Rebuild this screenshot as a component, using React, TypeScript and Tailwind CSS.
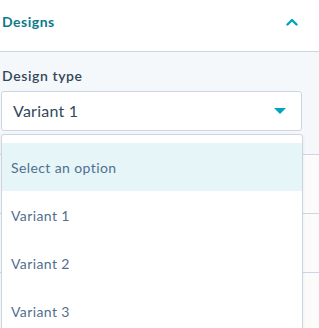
import { useState } from "react";

const options = ["Select an option", "Variant 1", "Variant 2", "Variant 3"];

export default function App() {
  const [value, setValue] = useState("Variant 1");
  const [open, setOpen] = useState(true);

  return (
    <div className="relative h-[328px] w-[319px] overflow-hidden bg-[#f5f8fa] font-['Lato',sans-serif]">
      <div className="flex h-[52px] items-start justify-between border-b border-[#cbd6e2] bg-white pl-[2px] pr-[21px] pt-[12px]">
        <h2 className="text-[14px] leading-[20px] font-bold tracking-[0.5px] text-[#0b7a8d]">Designs</h2>
        <svg className="mt-[6px]" width="12" height="8" viewBox="0 0 12 8" fill="none">
          <path d="M1.5 6.5L6 2l4.5 4.5" stroke="#00a4bd" strokeWidth="2.4" strokeLinecap="round" strokeLinejoin="round" />
        </svg>
      </div>
      <div className="px-[1px] pt-[13px]">
        <label className="block pl-[1px] text-[14px] font-semibold tracking-[0.6px] text-[#33475b]">Design type</label>
        <button
          onClick={() => setOpen(!open)}
          className="mt-[5px] flex h-[40px] w-[301px] items-center justify-between rounded-[3px] border border-[#cbd6e2] bg-white pl-[11px] pr-[15px] text-left text-[16px] tracking-[0.25px] text-[#33475b]"
        >
          <span>{value}</span>
          <svg width="12" height="6" viewBox="0 0 12 6">
            <path d="M0 0h12L6 6z" fill="#00a4bd" />
          </svg>
        </button>
      </div>
      <div className="mt-[23px] flex flex-col">
        <div className="h-[59px] border-t border-[#cbd6e2] bg-[#fbfbfb]" />
        <div className="h-[59px] border-t border-[#cbd6e2] bg-[#fbfbfb]" />
        <div className="h-[59px] border-t border-[#cbd6e2] bg-[#fbfbfb]" />
      </div>
      {open && (
        <ul className="absolute left-[1px] top-[134px] w-[302px] rounded-t-[3px] border border-[#cbd6e2] bg-white pt-[8px] shadow-[0_1px_3px_rgba(45,62,80,0.1)]">
          {options.map((o, i) => (
            <li
              key={o}
              onClick={() => { if (i > 0) setValue(o); setOpen(false); }}
              className={`flex h-[48px] items-center px-[9px] text-[14px] tracking-[0.4px] text-[#516f90] ${i === 0 ? "bg-[#e5f5f8] text-[#425b76]" : ""}`}
            >
              {o}
            </li>
          ))}
        </ul>
      )}
    </div>
  );
}
